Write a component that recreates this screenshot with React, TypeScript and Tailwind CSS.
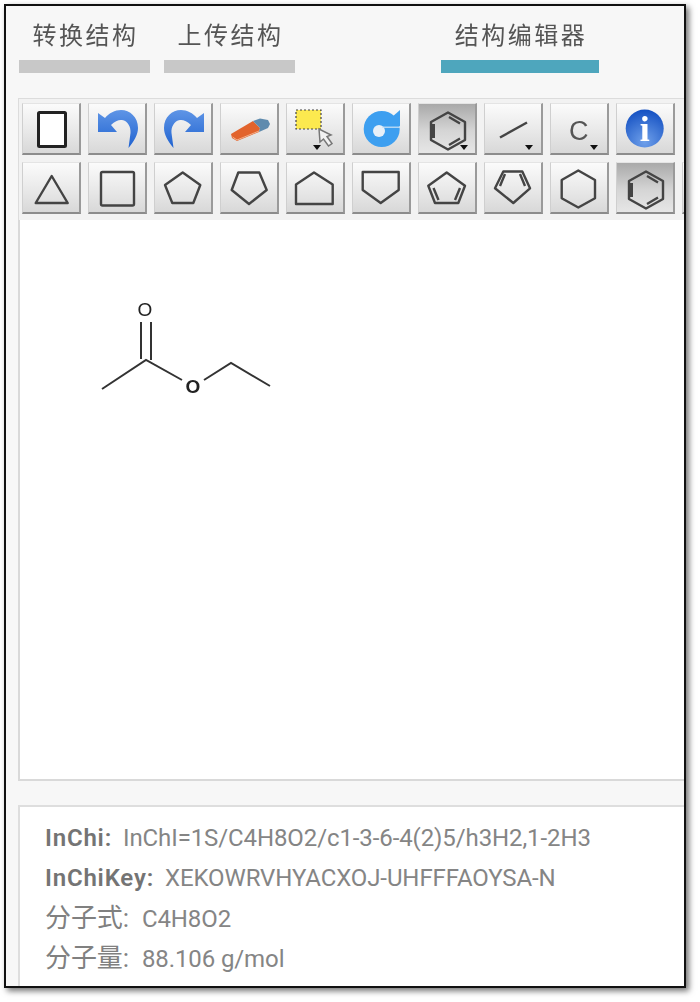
const line = 'fill-none stroke-[#444] stroke-[2.4px] [stroke-linejoin:round]'

function Caret({ x, y }: { x: number; y: number }) {
  return <polygon points={`${x - 4},${y - 2} ${x + 4},${y - 2} ${x},${y + 3}`} fill="#111" />
}

function Benzene({ caret }: { caret?: boolean }) {
  return (
    <>
      <polygon points="30,9.5 47,19 47,37 30,46.5 13,37 13,19" className={line} />
      <path d="M15.5 21 V35" className="fill-none stroke-[#444] stroke-[3px]" />
      <path d="M31 14 L42 20.5 M31 42 L42 35.5" className={line} />
      {caret && <Caret x={46} y={44} />}
    </>
  )
}

function Undo() {
  return (
    <>
      <defs>
        <linearGradient id="undoBlue" x1="0" y1="0" x2="0" y2="1">
          <stop offset="0" stopColor="#5f95e6" />
          <stop offset="1" stopColor="#1f62d0" />
        </linearGradient>
      </defs>
      <path
        d="M10 10 L10 29 L29 29 L23 22 C27 18 31 16.5 34 17 C40 18 43 24 42.5 30 C42 35 41 40 40.5 45 C46 38 50 32 50 25 C50 14 42 7 33 7 C27 7 21 10 17 15 Z"
        fill="url(#undoBlue)"
      />
    </>
  )
}

const tools = [
  <rect x="16.5" y="9.5" width="27" height="34" fill="#fff" stroke="#222" strokeWidth="3" rx="1" />,
  <Undo />,
  <g transform="translate(60 0) scale(-1 1)"><Undo /></g>,
  <>
    <path d="M11 31 L33 18 L40 25 L39 29 L17 38 L12 35 Z" fill="#e2632c" />
    <path d="M33 18 L40 15.5 L48 17 L50 21 L48 25 L39 29 L40 25 Z" fill="#5f8bae" />
    <path d="M12.5 34 L17 37 L39 28" fill="none" stroke="#f3b08c" strokeWidth="1" />
  </>,
  <>
    <rect x="10" y="7" width="25" height="19" fill="#fce94f" stroke="#444" strokeWidth="1.2" strokeDasharray="2 2" />
    <path d="M33 26 L34 39 L37.5 36 L42.5 43 L46 40.5 L41 33.5 L45 32 Z" fill="#f2f2f2" stroke="#777" strokeWidth="1.5" />
    <Caret x={31} y={44} />
  </>,
  <>
    <circle cx="29.7" cy="26" r="18" fill="#3d9ff0" />
    <polygon points="31,22 48,7 48,23" fill="#3d9ff0" />
    <circle cx="27" cy="28" r="6" fill="#e8f0f8" />
    <path d="M30 24.2 H48" stroke="#cfe3f5" strokeWidth="1.2" />
  </>,
  <Benzene caret />,
  <>
    <path d="M16 34.5 L43 19.5" className={line} />
    <Caret x={45} y={44} />
  </>,
  <>
    <text x="19" y="37" fontFamily="Liberation Sans, sans-serif" fontSize="27" fill="#555">C</text>
    <Caret x={44} y={44} />
  </>,
  <>
    <defs>
      <radialGradient id="infoBlue" cx="0.5" cy="0.85" r="0.9">
        <stop offset="0" stopColor="#6fa0ea" />
        <stop offset="1" stopColor="#0f4cc0" />
      </radialGradient>
    </defs>
    <circle cx="28.7" cy="25.5" r="19" fill="url(#infoBlue)" />
    <text x="28.7" y="38" textAnchor="middle" fontFamily="Liberation Serif, serif" fontWeight="700" fontSize="36" fill="#fff">i</text>
  </>,
]

const shapes = [
  <polygon points="29.7,14 13.7,41 45.7,41" className={line} />,
  <rect x="13" y="10" width="33" height="33.5" rx="1.5" className={line} />,
  <polygon points="28.7,10.5 46.3,23 39.3,41 18.3,41 11,23" className={line} />,
  <polygon points="18.3,10.5 39.3,10.5 46.7,28 29,42 11.7,28" className={line} />,
  <polygon points="28,10.5 46.7,22.5 46.7,42 10,42 10,22.5" className={line} />,
  <polygon points="10.7,10 46.7,10 46.7,28 28.7,41 10.7,28" className={line} />,
  <>
    <polygon points="28.7,10.5 47,23.7 40.3,41 17,41 10.3,23.7" className={line} />
    <path d="M15.5 26 L20.5 38 M42 26 L37 38" className={line} />
  </>,
  <>
    <polygon points="19.3,9.5 38.3,9.5 46,26.3 29.3,41 11,26.3" className={line} />
    <path d="M16 24 L21 12 M41 24 L36 12" className={line} />
  </>,
  <polygon points="28.3,8.5 45,18 45,36.3 28.3,45.5 11.7,36.3 11.7,18" className={line} />,
  <Benzene />,
  null,
]

function ToolButton({ active, children }: { active?: boolean; children?: React.ReactNode }) {
  return (
    <div
      className={
        'w-[59px] h-[52px] shrink-0 box-border border border-b-2 border-r-2 border-t-[#e4e4e4] border-l-[#cfcfcf] border-b-[#8c8c8c] border-r-[#9a9a9a] ' +
        (active
          ? 'bg-[linear-gradient(#a9a9a9,#d5d5d5_55%,#e6e6e6)]'
          : 'bg-[linear-gradient(#fbfbfb,#ececec_45%,#d8d8d8)]')
      }
    >
      <svg viewBox="0 0 59 52" className="w-[59px] h-[52px] -mt-px -ml-px overflow-visible">{children}</svg>
    </div>
  )
}

function Tab({ label, color, width, className }: { label: string; color: string; width: string; className: string }) {
  return (
    <div className={`flex flex-col items-center ${width} ${className}`}>
      <div className="h-[36px] mt-[12px] mb-[6px] pl-[2px] leading-[36px] text-[24px] tracking-[2.5px] text-[#555]">{label}</div>
      <div className={`h-[13px] w-full ${color}`} />
    </div>
  )
}

function Info({ label, value, bold }: { label: string; value: string; bold?: boolean }) {
  return (
    <div className="h-[40px] leading-[40px] whitespace-nowrap text-[24px] tracking-[-0.1px] text-[#858585]">
      <span className={bold ? 'font-semibold tracking-[0.8px] text-[#747474]' : 'text-[26px] text-[#808080]'}>{label}:</span>
      <span className={bold ? 'ml-[11px]' : 'ml-[13px]'}>{value}</span>
    </div>
  )
}

export default function App() {
  return (
    <div className="w-[700px] h-[1002px] pt-[4px] pl-[4px] bg-white overflow-hidden">
      <div
        className="w-[682px] h-[984px] box-border border-2 border-[#111] bg-[#f7f7f7] overflow-hidden shadow-[3px_3px_6px_rgba(0,0,0,0.55)] flex flex-col blur-[0.5px]"
        style={{ fontFamily: 'Roboto, "Noto Sans CJK SC", sans-serif' }}
      >
        <div className="flex">
          <Tab label="转换结构" color="bg-[#c8c8c8]" width="w-[131px]" className="ml-[13px]" />
          <Tab label="上传结构" color="bg-[#c8c8c8]" width="w-[131px]" className="ml-[14px]" />
          <Tab label="结构编辑器" color="bg-[#4ea6bd]" width="w-[158px]" className="ml-[146px]" />
        </div>

        <div className="ml-[12px] mt-[25px] flex flex-col flex-1 min-h-0">
          <div className="border-t border-l border-[#dcdcdc] bg-[#f2f2f2] pt-[4px] pl-[3px] pb-[6px] flex flex-col gap-[7px] overflow-hidden">
            <div className="flex gap-[7px]">
              {tools.map((icon, i) => (
                <ToolButton key={i} active={i === 6}>{icon}</ToolButton>
              ))}
            </div>
            <div className="flex gap-[7px]">
              {shapes.map((icon, i) => (
                <ToolButton key={i} active={i === 9}>{icon}</ToolButton>
              ))}
            </div>
          </div>

          <div className="h-[561px] box-border bg-white border-l-2 border-b-2 border-[#d9d9d9] shrink-0">
            <svg viewBox="95 295 180 105" className="w-[180px] h-[105px] ml-[75px] mt-[75px]">
              <path
                d="M102 389 L146 360 L182 380 M204 380 L231 363 L270 386 M141 322 V359 M151 322 V360"
                fill="none"
                stroke="#333"
                strokeWidth="2"
              />
              <text x="145" y="316" textAnchor="middle" fontFamily="Liberation Sans, sans-serif" fontSize="19" fill="#222">O</text>
              <text x="193" y="392.5" textAnchor="middle" fontFamily="Liberation Sans, sans-serif" fontWeight="700" fontSize="19" fill="#222">O</text>
            </svg>
          </div>

          <div className="mt-[24px] flex-1 box-border bg-white border-t-2 border-l-2 border-[#dedede] pt-[11px] pl-[25px]">
            <Info bold label="InChi" value="InChI=1S/C4H8O2/c1-3-6-4(2)5/h3H2,1-2H3" />
            <Info bold label="InChiKey" value="XEKOWRVHYACXOJ-UHFFFAOYSA-N" />
            <Info label="分子式" value="C4H8O2" />
            <Info label="分子量" value="88.106 g/mol" />
          </div>
        </div>
      </div>
    </div>
  )
}
